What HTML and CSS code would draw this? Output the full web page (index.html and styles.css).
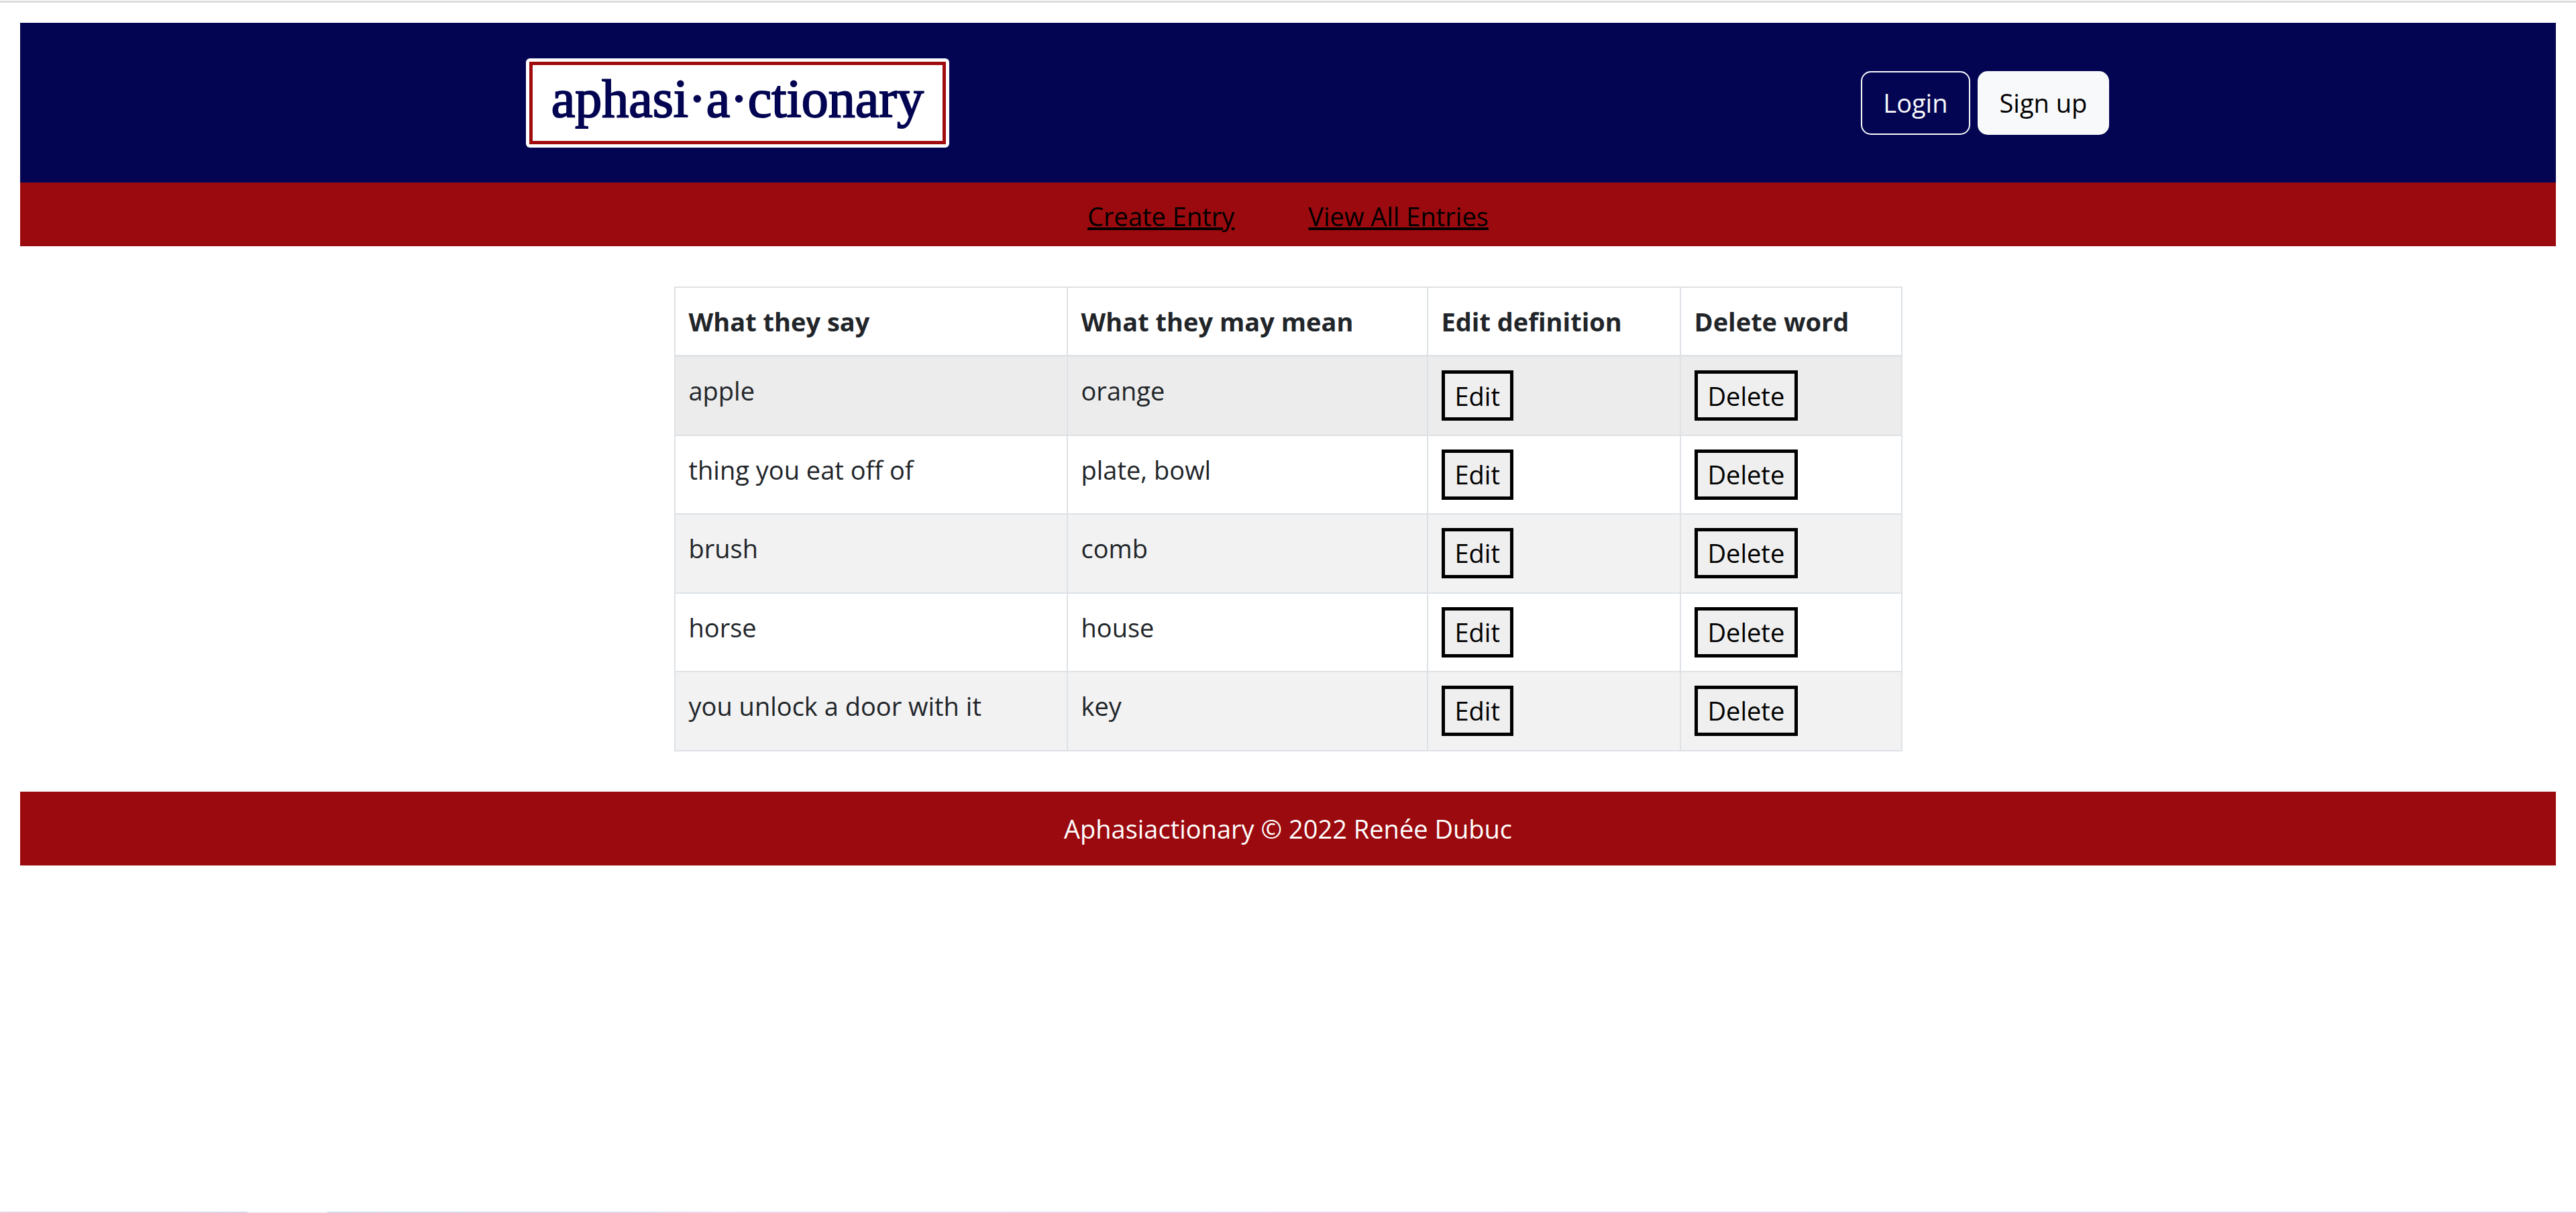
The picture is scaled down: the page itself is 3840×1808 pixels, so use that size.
FILE: index.html
```html
<!DOCTYPE html>
<html lang="en">
<head>
<meta charset="utf-8">
<title>Aphasiactionary</title>
<meta name="viewport" content="width=device-width, initial-scale=1">
<link rel="stylesheet" href="styles.css">
</head>
<body>
<div class="page">
  <header class="header">
    <a class="logo" href="#"><span class="logo-text">aphasi·a·ctionary</span></a>
    <div class="account">
      <button type="button" class="btn btn-outline">Login</button>
      <button type="button" class="btn btn-light">Sign up</button>
    </div>
  </header>
  <nav class="nav">
    <a href="#">Create Entry</a>
    <a href="#">View All Entries</a>
  </nav>
  <main class="main">
    <table class="entries">
      <colgroup><col class="col-say"><col class="col-mean"><col class="col-edit"><col class="col-delete"></colgroup>
      <thead>
        <tr><th scope="col">What they say</th><th scope="col">What they may mean</th><th scope="col">Edit definition</th><th scope="col">Delete word</th></tr>
      </thead>
      <tbody>
        <tr class="active"><td>apple</td><td>orange</td><td><button type="button" class="action">Edit</button></td><td><button type="button" class="action">Delete</button></td></tr>
        <tr><td>thing you eat off of</td><td>plate, bowl</td><td><button type="button" class="action">Edit</button></td><td><button type="button" class="action">Delete</button></td></tr>
        <tr><td>brush</td><td>comb</td><td><button type="button" class="action">Edit</button></td><td><button type="button" class="action">Delete</button></td></tr>
        <tr><td>horse</td><td>house</td><td><button type="button" class="action">Edit</button></td><td><button type="button" class="action">Delete</button></td></tr>
        <tr><td>you unlock a door with it</td><td>key</td><td><button type="button" class="action">Edit</button></td><td><button type="button" class="action">Delete</button></td></tr>
      </tbody>
    </table>
  </main>
  <footer class="footer">Aphasiactionary © 2022 Renée Dubuc</footer>
</div>
</body>
</html>
```
FILE: styles.css
```css
*, *::before, *::after { box-sizing: border-box; }

body {
  margin: 0;
  min-height: 100vh;
  display: flex;
  flex-direction: column;
  justify-content: space-between;
  background: #fff;
  color: #212529;
  font-family: "Open Sans", sans-serif;
  font-size: 38px;
  line-height: 60px;
}

body::before {
  content: "";
  height: 3px;
  margin-top: 1px;
  background: #dcdddc;
}

body::after {
  content: "";
  height: 2px;
  background: linear-gradient(to right, #ead0de, #e4cee2 3%, #e4cee2 7%, #d6d2e6 9%, #d6d2e6 9.6%, #efeef4 9.6%, #efeef4 12.7%, #d6d4ea 12.7%, #d9d6ea 23%, #eed8ee 28%, #ecd0ec 55%, #e6d0ea);
}

.page {
  flex: 1;
  padding: 30px;
}

.header {
  display: flex;
  align-items: center;
  justify-content: space-around;
  height: 238px;
  background: #030553;
}

.logo {
  margin: 0 28px 0 88px;
  padding: 5px;
  border-radius: 6px;
  background: #fff;
  color: #030553;
  text-decoration: none;
}

.logo-text {
  display: block;
  padding: 10px 28px 23px;
  border: 5px solid #a00b0e;
  font-family: "Liberation Serif", serif;
  font-size: 80px;
  line-height: 80px;
  -webkit-text-stroke: 2px #030553;
}

.account {
  display: flex;
  gap: 11px;
}

.btn {
  height: 95px;
  padding: 0 31px;
  border: 2px solid #f8f9fa;
  border-radius: 15px;
  font: inherit;
}

.btn-outline { background: transparent; color: #f8f9fa; }
.btn-light { background: #f8f9fa; color: #000; }

.nav {
  display: flex;
  justify-content: center;
  gap: 110px;
  height: 95px;
  padding-top: 20px;
  background: #9b0a0e;
}

.nav a {
  color: #000;
  text-decoration-thickness: 4px;
  text-underline-offset: 2px;
}

.main {
  padding: 60px 0;
}

.entries {
  margin: 0 auto;
  border-collapse: collapse;
  table-layout: fixed;
  width: 1829px;
}

.col-say { width: 585px; }
.col-mean { width: 537px; }
.col-edit { width: 377px; }
.col-delete { width: 330px; }

.entries th, .entries td {
  padding: 20px;
  border: 2px solid #dee2e6;
  text-align: left;
  vertical-align: top;
}

.entries thead th { border-bottom: 3px solid #dee2e6; }
.entries tbody tr { height: 117px; }
.entries tbody tr:nth-child(odd) { height: 118px; background: #f2f2f2; }
.entries tbody tr.active { background: #ececec; }

.action {
  display: block;
  height: 75px;
  padding: 0 15px;
  border: 5px solid #000;
  background: #efefef;
  color: #000;
  font: inherit;
}

.footer {
  height: 110px;
  padding-top: 25px;
  background: #9b0a0e;
  color: #fff;
  text-align: center;
}
```
